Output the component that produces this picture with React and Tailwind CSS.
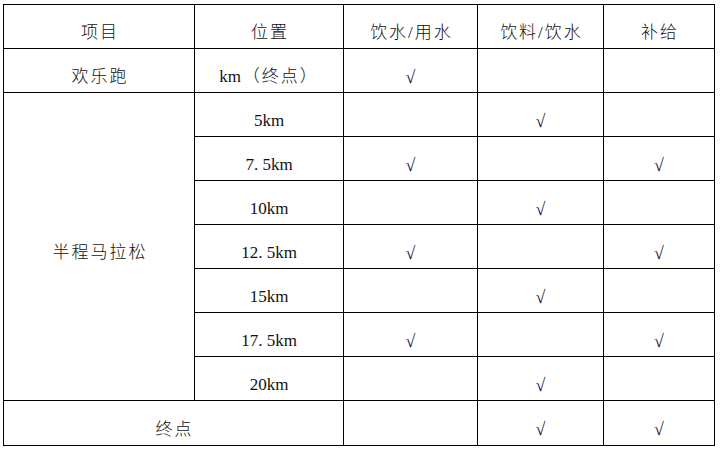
const font = { fontFamily: '"Liberation Serif", "Noto Sans CJK SC", serif' };

const rows = [
  { pos: "5km", a: false, b: true, c: false },
  { pos: "7. 5km", a: true, b: false, c: true },
  { pos: "10km", a: false, b: true, c: false },
  { pos: "12. 5km", a: true, b: false, c: true },
  { pos: "15km", a: false, b: true, c: false },
  { pos: "17. 5km", a: true, b: false, c: true },
  { pos: "20km", a: false, b: true, c: false },
];

function Check({ on }) {
  if (!on) return null;
  return <span className="text-[18px] text-[#1a1a3a]">√</span>;
}

function Zh({ children }) {
  return <span className="tracking-[2px] pl-[2px]">{children}</span>;
}

const cell = "border border-black text-center align-middle pt-[13px] pb-0 font-light";

export default function App() {
  return (
    <div className="bg-white w-[720px] h-[451px] pt-[4px] pl-[3px] text-[17px] text-[#111]" style={font}>
      <table className="border-collapse table-fixed w-[711px]">
        <colgroup>
          <col className="w-[191px]" />
          <col className="w-[149px]" />
          <col className="w-[134px]" />
          <col className="w-[126px]" />
          <col className="w-[111px]" />
        </colgroup>
        <tbody>
          <tr className="h-[44px]">
            <td className={cell}><Zh>项目</Zh></td>
            <td className={cell}><Zh>位置</Zh></td>
            <td className={cell}><Zh>饮水/用水</Zh></td>
            <td className={cell}><Zh>饮料/饮水</Zh></td>
            <td className={cell}><Zh>补给</Zh></td>
          </tr>
          <tr className="h-[44px]">
            <td className={cell}><Zh>欢乐跑</Zh></td>
            <td className={cell}>km<Zh>（终点）</Zh></td>
            <td className={cell}><Check on /></td>
            <td className={cell}></td>
            <td className={cell}></td>
          </tr>
          {rows.map((r, i) => (
            <tr key={r.pos} className="h-[44px]">
              {i === 0 && (
                <td rowSpan={7} className={cell}><Zh>半程马拉松</Zh></td>
              )}
              <td className={cell}>{r.pos}</td>
              <td className={cell}><Check on={r.a} /></td>
              <td className={cell}><Check on={r.b} /></td>
              <td className={cell}><Check on={r.c} /></td>
            </tr>
          ))}
          <tr className="h-[45px]">
            <td colSpan={2} className={cell}><Zh>终点</Zh></td>
            <td className={cell}></td>
            <td className={cell}><Check on /></td>
            <td className={cell}><Check on /></td>
          </tr>
        </tbody>
      </table>
    </div>
  );
}
